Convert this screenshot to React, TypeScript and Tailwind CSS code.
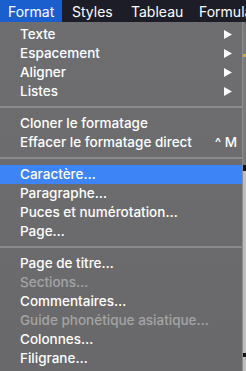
import React from 'react'

type Item =
  | { kind: 'item'; label: string; sub?: boolean; disabled?: boolean; active?: boolean; shortcut?: string }
  | { kind: 'sep' }

const items: Item[] = [
  { kind: 'item', label: 'Texte', sub: true },
  { kind: 'item', label: 'Espacement', sub: true },
  { kind: 'item', label: 'Aligner', sub: true },
  { kind: 'item', label: 'Listes', sub: true },
  { kind: 'sep' },
  { kind: 'item', label: 'Cloner le formatage' },
  { kind: 'item', label: 'Effacer le formatage direct', shortcut: '^ M' },
  { kind: 'sep' },
  { kind: 'item', label: 'Caractère…', active: true },
  { kind: 'item', label: 'Paragraphe…' },
  { kind: 'item', label: 'Puces et numérotation…' },
  { kind: 'item', label: 'Page…' },
  { kind: 'sep' },
  { kind: 'item', label: 'Page de titre…' },
  { kind: 'item', label: 'Sections…', disabled: true },
  { kind: 'item', label: 'Commentaires…' },
  { kind: 'item', label: 'Guide phonétique asiatique…', disabled: true },
  { kind: 'item', label: 'Colonnes…' },
  { kind: 'item', label: 'Filigrane…' },
]

function Arrow() {
  return (
    <svg width="8" height="9" viewBox="0 0 8 9">
      <polygon points="0,0 8,4.5 0,9" fill="#ffffff" />
    </svg>
  )
}

export default function App() {
  return (
    <div
      className="w-[246px] h-[371px] overflow-hidden bg-[#6c6c6e] flex flex-col"
      style={{ fontFamily: 'Inter, "Noto Sans", sans-serif' }}
    >
      {/* menu bar */}
      <div className="h-[22px] bg-[#1d1d27] flex items-center text-[14px] text-white whitespace-nowrap overflow-hidden shrink-0">
        <div className="h-full w-[62px] shrink-0 bg-[#1b5fcf] flex items-center pl-[8px]">Format</div>
        <div className="w-[59px] shrink-0 pl-[10px]">Styles</div>
        <div className="w-[68px] shrink-0 pl-[10px]">Tableau</div>
        <div className="shrink-0 pl-[10px]">Formula</div>
      </div>

      <div className="flex flex-1">
        {/* dropdown */}
        <div className="w-[243px] bg-gradient-to-b from-[#6e6e70] to-[#69696b] pt-[3px] text-[13.5px] font-medium border-r border-[#8c8c8e]">
          {items.map((it, i) =>
            it.kind === 'sep' ? (
              <div key={i} className="h-[13px] pt-[5px]">
                <div className="h-[2px] bg-[#8a8a8c]" />
              </div>
            ) : (
              <div
                key={i}
                className={`h-[19px] flex items-center pl-[20px] pr-[10px] ${it.active ? 'bg-[#3d84f7]' : ''}`}
              >
                <span className={`flex-1 whitespace-nowrap ${it.disabled ? 'text-[#a4a4a6]' : 'text-white'}`}>
                  {it.label}
                </span>
                {it.sub && <Arrow />}
                {it.shortcut && <span className="text-white -mr-[5px] whitespace-pre">{it.shortcut}</span>}
              </div>
            )
          )}
        </div>
        <div className="flex-1 bg-[#bdbdbd] flex flex-col">
          <div className="h-[32px] bg-[#7a7a7a]" />
          <div className="h-[3px] bg-[#d9a53a]" />
          <div className="h-[108px] bg-[#7a7a7a]" />
          <div className="h-[6px] bg-[#111]" />
          <div className="flex-1" />
          <div className="h-[4px] bg-[#111] mb-[14px]" />
        </div>
      </div>
    </div>
  )
}
